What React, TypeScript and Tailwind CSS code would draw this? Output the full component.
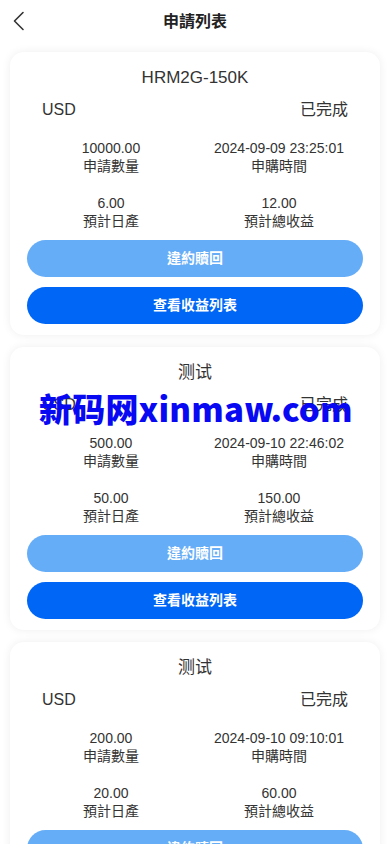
import React from "react";

const font = { fontFamily: '"Liberation Sans", Arial, "Noto Sans CJK TC", "Noto Sans CJK SC", sans-serif' };

type Item = {
  title: string;
  amount: string;
  time: string;
  daily: string;
  total: string;
};

const items: Item[] = [
  { title: "HRM2G-150K", amount: "10000.00", time: "2024-09-09 23:25:01", daily: "6.00", total: "12.00" },
  { title: "测试", amount: "500.00", time: "2024-09-10 22:46:02", daily: "50.00", total: "150.00" },
  { title: "测试", amount: "200.00", time: "2024-09-10 09:10:01", daily: "20.00", total: "60.00" },
];

function Cell({ value, label }: { value: string; label: string }) {
  return (
    <div className="flex flex-col items-center text-[14px] leading-[18px] text-[#333]">
      <span>{value}</span>
      <span>{label}</span>
    </div>
  );
}

function Card({ it }: { it: Item }) {
  return (
    <div className="bg-white rounded-[14px] shadow-[0_0_10px_rgba(0,0,0,0.07)] px-[17px] pt-[14px] pb-[11px]">
      <div className="text-center text-[17px] leading-[24px] text-[#333]">{it.title}</div>
      <div className="flex justify-between px-[15px] mt-[9px] text-[16px] leading-[22px] text-[#333]">
        <span>USD</span>
        <span>已完成</span>
      </div>
      <div className="grid grid-cols-2 mt-[18px] gap-y-[19px]">
        <Cell value={it.amount} label="申請數量" />
        <Cell value={it.time} label="申購時間" />
        <Cell value={it.daily} label="預計日產" />
        <Cell value={it.total} label="預計總收益" />
      </div>
      <div className="flex flex-col gap-[10px] mt-[10px]">
        <button className="h-[37px] rounded-full bg-[#66adf8] text-white text-[14px] font-bold">違約贖回</button>
        <button className="h-[37px] rounded-full bg-[#0066f5] text-white text-[14px] font-bold">查看收益列表</button>
      </div>
    </div>
  );
}

export default function App() {
  return (
    <div className="relative min-h-[844px] bg-white overflow-hidden" style={font}>
      <div className="h-[43px] bg-white flex items-center relative">
        <svg className="absolute left-[12px] top-[11px]" width="14" height="20" viewBox="0 0 14 20" fill="none">
          <path d="M11 1.5 L2.5 10 L11 18.5" stroke="#333" strokeWidth="1.6" strokeLinecap="round" strokeLinejoin="round" />
        </svg>
        <div className="w-full text-center text-[16px] font-bold text-[#222]">申請列表</div>
      </div>
      <div className="flex flex-col gap-[12px] px-[10px] pt-[9px]">
        {items.map((it, i) => (
          <Card key={i} it={it} />
        ))}
      </div>
      <div
        className="absolute left-[39px] top-[388px] text-[33px] leading-[40px] font-black text-[#0808f2] whitespace-nowrap tracking-[0.2px]"
        style={{ fontFamily: '"Noto Sans CJK SC", "DejaVu Sans", sans-serif' }}
      >
        新码网xinmaw.com
      </div>
    </div>
  );
}
